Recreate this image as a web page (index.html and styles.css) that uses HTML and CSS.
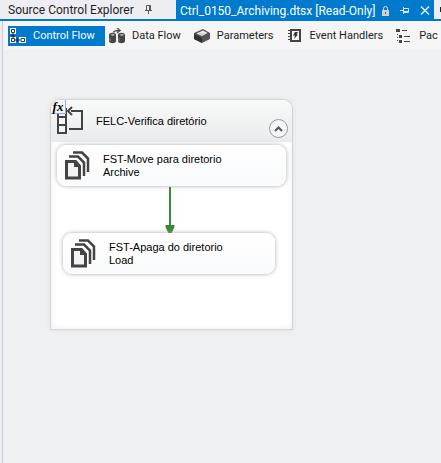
FILE: index.html
```html
<!DOCTYPE html>
<html lang="en">
<head>
<meta charset="utf-8">
<title>Ctrl_0150_Archiving.dtsx</title>
<link rel="stylesheet" href="styles.css">
</head>
<body>
<div class="window">
  <header class="tabs">
    <div class="tab">
      <a class="tab-label" href="#">Source Control Explorer</a>
      <button class="tool" aria-label="Pin tab"><svg width="9" height="9" viewBox="0 0 9 9"><path d="M2.500 5V.5h4V5M5.500 1v4M1 5.500h7M4.500 6v3" fill="none" stroke="#55565c"/></svg></button>
    </div>
    <div class="tab active">
      <a class="tab-label" href="#">Ctrl_0150_Archiving.dtsx [Read-Only]</a>
      <svg class="lock" width="7" height="10" viewBox="0 0 7 10"><path d="M1.500 4V2.500a2 2 0 0 1 4 0V4" fill="none" stroke="#d3d8dc"/><path d="M0 4h7v6H0z" fill="#d3d0ca"/><path d="M3 6h1v2H3z" fill="#4c6880"/></svg>
      <button class="tool" aria-label="Keep open"><svg width="9" height="9" viewBox="0 0 9 9"><path d="M0 4.500h3M3.500 1v7M4 2.500h4.500v4H4M4 5.500h4" fill="none" stroke="#d4e8f8"/></svg></button>
      <button class="tool" aria-label="Close"><svg width="10" height="9" viewBox="0 0 10 9"><path d="M1 .5l8 8M9 .5l-8 8" fill="none" stroke="#d4e8f8" stroke-width="1.600"/></svg></button>
    </div>
    <div class="tab next"><svg width="3" height="5" viewBox="0 0 3 5"><path d="M0 0h3v1H1v3h2v1H0z" fill="#222"/></svg></div>
  </header>
  <nav class="toolbar">
    <button class="view selected">
      <svg width="16" height="16" viewBox="0 0 16 16"><path d="M0 0h6v6H0zM0 9h6v6H0zM9 9h7v6H9z" fill="#f5f8fa"/><path d="M1.500 1.500h3v3h-3zM1.500 10.500h3v3h-3zM11 10.500h3.500v3H11z" fill="#fff" stroke="#333"/><path d="M3 5v5M1.500 7.500h3M5 12h5M7.500 10.500v3" fill="none" stroke="#222"/></svg>
      <span>Control Flow</span>
    </button>
    <button class="view">
      <svg width="16" height="16" viewBox="0 0 16 16"><path d="M0 7c0-3 7-3 7 0v6c0 3-7 3-7 0zM9 7c0-3 7-3 7 0v6c0 3-7 3-7 0z" fill="#454545"/><path d="M1.500 7c1-1.500 3.500-1.500 4.500 0-1 1-3.500 1-4.500 0zM10.500 7c1-1.500 3.500-1.500 4.500 0-1 1-3.500 1-4.500 0z" fill="#bbb"/><path d="M1 10v3M10 10v3" stroke="#888"/><path d="M4.500 4.500C5 2.500 7 2.500 10 2.500M8 0l3 2.500L8 5" fill="none" stroke="#555" stroke-width="1.500"/></svg>
      <span>Data Flow</span>
    </button>
    <button class="view">
      <svg width="16" height="16" viewBox="0 0 16 16"><path d="M0 5l9-4 7 4v6l-8 4-8-4z" fill="#555"/><path d="M0 6l8 4v5l-8-4z" fill="#303030"/><path d="M2.500 5.500L9 2.500l4.500 2.500L8 8z" fill="#eee"/><path d="M3.500 5.500h8L8 7z" fill="#bbb"/></svg>
      <span>Parameters</span>
    </button>
    <button class="view">
      <svg width="16" height="16" viewBox="0 0 16 16"><path d="M4 2h9v11H4z" fill="#f5f5f5" stroke="#444" stroke-width="2"/><path d="M1 2.500h2M1 5.500h2M1 8.500h2M1 11.500h2" stroke="#444"/><path d="M8 4h3L9.500 6.500H11L7 11l1-3.500H6z" fill="#333"/></svg>
      <span>Event Handlers</span>
    </button>
    <button class="view">
      <svg width="16" height="16" viewBox="0 0 16 16"><path d="M0 1h4v3H0zM3 7h3v3H3zM3 12h3v3H3z" fill="#444"/><path d="M6 2.500h5M8 8.500h6M8 13.500h6M1.500 6v1M1.500 9v1M1.500 12v1" stroke="#444" fill="none"/></svg>
      <span>Pac</span>
    </button>
  </nav>
  <main class="canvas">
    <section class="container">
      <header class="container-head">
        <svg class="loop" width="34" height="36" viewBox="0 0 34 36"><path d="M7 9h8v24H7zM7 17h8M7 25h8" fill="#f5f6f7" stroke="#444" stroke-width="2"/><path d="M20 11h11v18H18M21 7l-4 4 4 4" fill="none" stroke="#444" stroke-width="2"/></svg>
        <span class="badge">fx</span>
        <h1 class="title">FELC-Verifica diretório</h1>
        <button class="collapse" aria-label="Collapse"><svg width="9" height="6" viewBox="0 0 9 6"><path d="M1 5l3.500-3.500L8 5" fill="none" stroke="#555" stroke-width="2"/></svg></button>
      </header>
      <article class="node first">
        <svg class="files" width="26" height="30" viewBox="0 0 26 30"><path d="M8 1.500h9l6 6V21M4 5.500h9l6 6V25" fill="none" stroke="#444" stroke-width="2.500"/><path d="M1.500 10.500h9l4 4.500v12h-13z" fill="#f3f3f4" stroke="#444" stroke-width="3"/><path d="M9 10v6h6z" fill="#444"/></svg>
        <p>FST-Move para diretorio Archive</p>
      </article>
      <svg class="arrow" width="10" height="47" viewBox="0 0 10 47"><path d="M4 0h2v38h3.500v2L6.500 46.500h-3L.5 40v-2H4z" fill="#388a34"/></svg>
      <article class="node second">
        <svg class="files" width="26" height="30" viewBox="0 0 26 30"><path d="M8 1.500h9l6 6V21M4 5.500h9l6 6V25" fill="none" stroke="#444" stroke-width="2.500"/><path d="M1.500 10.500h9l4 4.500v12h-13z" fill="#f3f3f4" stroke="#444" stroke-width="3"/><path d="M9 10v6h6z" fill="#444"/></svg>
        <p>FST-Apaga do diretorio Load</p>
      </article>
    </section>
  </main>
</div>
</body>
</html>
```
FILE: styles.css
```css
* { box-sizing: border-box; }
body { margin: 0; background: #eeeef2; color: #1e1e1e; font: 12px/20px Roboto, sans-serif; overflow: hidden; }
button { border: 0; padding: 0; margin: 0; background: none; color: inherit; font: inherit; }
svg { display: block; flex: none; }
.window { display: flex; flex-direction: column; min-height: 100vh; }
.tabs { display: flex; height: 21px; border-bottom: 2px solid #007acc; }
.tab { display: flex; align-items: center; gap: 10px; width: 176px; padding-left: 8px; flex: none; white-space: nowrap; }
.tab-label { color: inherit; text-decoration: none; }
.tab.active { width: 258px; gap: 7px; padding: 0 5px 0 4px; height: 21px; background: #007acc; color: #fff; }
.tab.active .tab-label { flex: 1; }
.tab.active .tool { margin-left: 4px; }
.tab.next { flex: 1; width: auto; padding-left: 6px; overflow: hidden; }
.toolbar { display: flex; height: 29px; margin-left: 2px; padding: 5px 0 4px 5px; border-left: 1px solid #ccccdc; background: #f5f5f5; font-size: 11px; overflow: hidden; }
.view { display: flex; align-items: center; gap: 7px; flex: none; height: 20px; padding: 0 2px; margin-right: 9px; white-space: nowrap; }
.view.selected { width: 97px; margin-right: 2px; background: #007acc; color: #fff; }
.canvas { flex: 1; margin-left: 2px; padding: 49px 47px; border-left: 1px solid #ccccdc; background: #eff0f2; }
.container { position: relative; width: 243px; height: 231px; border: 1px solid #d3d4d6; border-radius: 10px 10px 0 0; background: #fff; box-shadow: 0 0 5px #dfe0e2, inset 0 0 6px #eee; font: 11px/13px "Liberation Sans", sans-serif; color: #000; }
.container-head { display: flex; position: relative; height: 42px; padding-left: 45px; align-items: center; border-radius: 9px 9px 0 0; background: linear-gradient(#f8f9f9, #eaebec); }
.title { margin: 0; font: inherit; }
.loop { position: absolute; left: 0; top: 0; }
.badge { position: absolute; left: 0; top: 0; width: 15px; height: 14px; border-right: 1px solid #91a9cb; border-bottom: 1px solid #91a9cb; border-radius: 9px 0 0 0; background: #f2f6fb; font: italic bold 13px/13px "Liberation Serif", serif; text-align: center; }
.collapse { position: absolute; right: 4px; top: 19px; display: grid; place-items: center; width: 19px; height: 19px; border: 1px solid #999; border-radius: 50%; background: #f5f6f7; }
.node { position: absolute; display: flex; gap: 12px; height: 41px; padding: 6px 8px; border-radius: 9px; background: linear-gradient(#fff, #f9fafc); box-shadow: 0 0 4px #aaa; }
.node p { width: 130px; margin: 2px 0 0; }
.first { left: 6px; top: 45px; width: 229px; }
.second { left: 12px; top: 133px; width: 212px; }
.arrow { position: absolute; left: 114px; top: 87px; }
```
